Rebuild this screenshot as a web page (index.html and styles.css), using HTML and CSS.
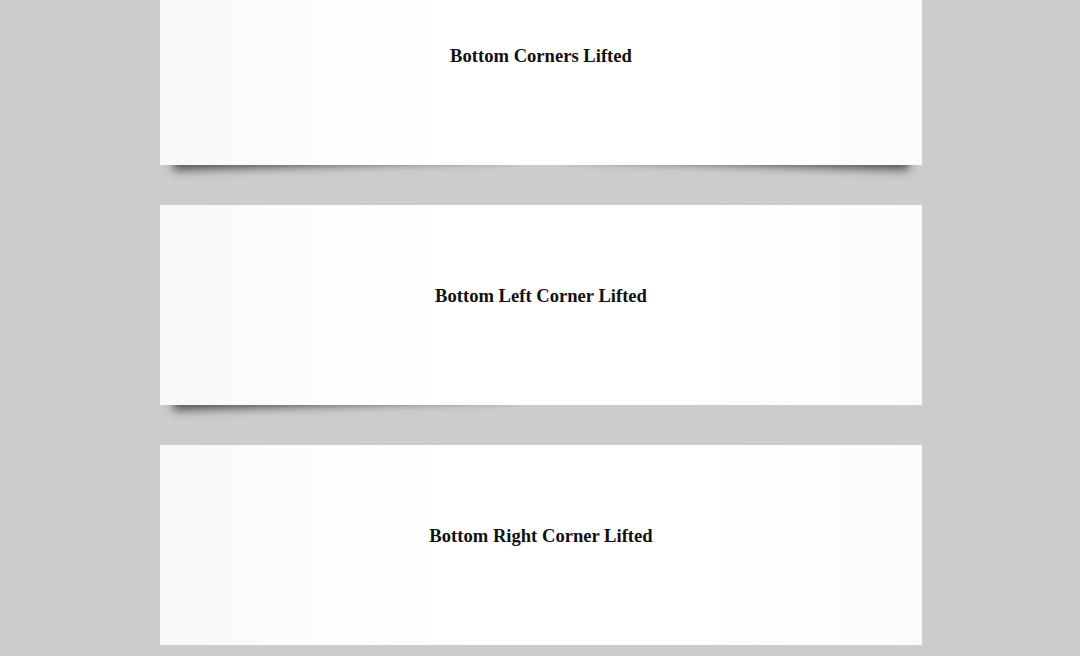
FILE: index.html
```html
<!DOCTYPE html>
<html lang="en">
<head>
<meta charset="utf-8">
<title>Lifted Corners</title>
<link rel="stylesheet" href="styles.css">
</head>
<body>
  <main class="stack">
    <section class="paper lift-both">
      <h3 class="paper-title">Bottom Corners Lifted</h3>
    </section>
    <section class="paper lift-left">
      <h3 class="paper-title">Bottom Left Corner Lifted</h3>
    </section>
    <section class="paper lift-right">
      <h3 class="paper-title">Bottom Right Corner Lifted</h3>
    </section>
  </main>
</body>
</html>
```
FILE: styles.css
```css
html, body {
  margin: 0;
  padding: 0;
  background: #cccccc;
  overflow: hidden;
}

.stack {
  display: flex;
  flex-direction: column;
  gap: 40px;
  width: 762px;
  margin: -35px 0 0 160px;
  isolation: isolate;
}

.paper {
  position: relative;
  height: 200px;
  box-sizing: border-box;
  padding-bottom: 18px;
  display: flex;
  align-items: center;
  justify-content: center;
  background: linear-gradient(to right, #f8f8f8 0%, #fcfcfc 16%, #ffffff 40%, #ffffff 70%, #fbfbfb 100%);
}

.paper-title {
  margin: 0;
  font-family: "Liberation Serif", "Times New Roman", serif;
  font-weight: bold;
  font-size: 18.6px;
  color: #111;
}

/* lifted corner shadows sit behind the sheet */
.lift-both::before,
.lift-both::after,
.lift-left::before,
.lift-right::after {
  content: "";
  position: absolute;
  z-index: -1;
  bottom: 15px;
  width: 45%;
  height: 20%;
  box-shadow: 0 15px 10px rgba(0, 0, 0, 0.6);
}

.lift-both::before,
.lift-left::before {
  left: 12px;
  transform: rotate(-1.8deg);
}

.lift-both::after,
.lift-right::after {
  right: 12px;
  transform: rotate(1.8deg);
}
```
